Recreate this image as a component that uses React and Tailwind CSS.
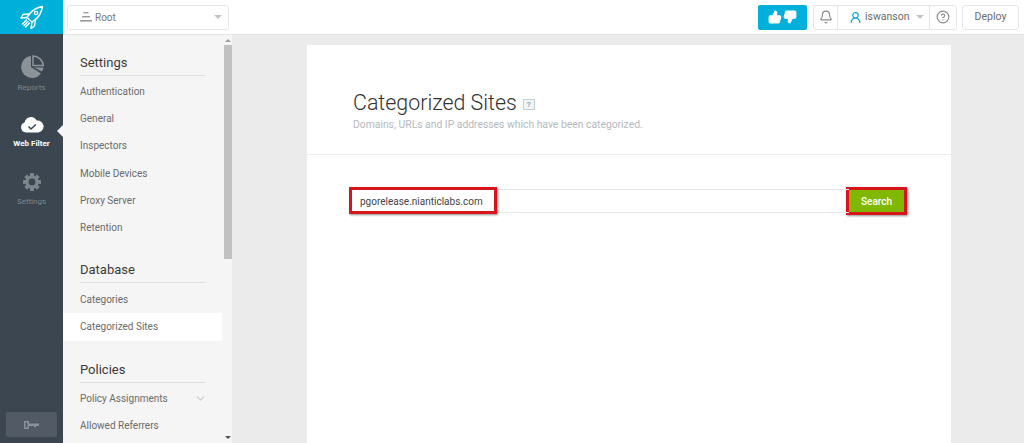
import { ChevronDown, Bell, UserRound, CircleHelp, ThumbsUp, ThumbsDown } from 'lucide-react';

const font = "font-['Roboto',sans-serif]";

function Rocket() {
  return (
    <svg width="24" height="24" viewBox="0 0 24 24" fill="none" stroke="white" strokeWidth="1.4" strokeLinejoin="round" strokeLinecap="round">
      <path d="M22.5 1.5 C17 2.5 13 4.5 9.5 9 L7 12.5 L12 17 L15.5 14.5 C20 11 21.5 7 22.5 1.5 Z" />
      <path d="M9.5 9 L3 9.5 L1 13 L7 12.5" />
      <path d="M15.5 14.5 L14.5 21 L11 23.5 L12 17" />
      <path d="M6.5 15 L2.5 19 M8 16.5 L4 20.5 M9.5 18 L5.5 22" />
      <circle cx="16" cy="8" r="1.6" />
    </svg>
  );
}

function PieIcon() {
  return (
    <svg width="24" height="24" viewBox="0 0 24 24">
      <path d="M11 1 A11 11 0 1 0 21 18.5 L11 12 Z" fill="#8b9298" />
      <path d="M13 1 A11 11 0 0 1 23.5 10.5 L13 10.5 Z" fill="none" stroke="#8b9298" strokeWidth="1.6" />
      <path d="M14 12.5 L23.5 12.5 A11 11 0 0 1 22 16.5 Z" fill="#8b9298" />
    </svg>
  );
}

function CloudIcon() {
  return (
    <svg width="24" height="17" viewBox="0 0 24 17">
      <path d="M6 16.5 A5.2 5.2 0 0 1 4.6 6.4 A6.4 6.4 0 0 1 16.6 4.6 A6 6 0 0 1 18.5 16.5 Z" fill="white" />
      <path d="M8.5 10.5 L11 13 L15.8 8.5" fill="none" stroke="#3c4650" strokeWidth="1.6" />
    </svg>
  );
}

function GearIcon() {
  const teeth = [0, 45, 90, 135, 180, 225, 270, 315];
  return (
    <svg width="18" height="18" viewBox="0 0 18 18">
      {teeth.map((deg) => (
        <rect key={deg} x="7" y="0" width="4" height="4" rx="0.6" fill="#7d858c" transform={`rotate(${deg} 9 9)`} />
      ))}
      <circle cx="9" cy="9" r="5" fill="none" stroke="#7d858c" strokeWidth="3.2" />
    </svg>
  );
}

function KeyIcon() {
  return (
    <svg width="15" height="8" viewBox="0 0 15 8" fill="#8a9097">
      <path d="M0 0 H5 V2.5 H15 V5 H12.5 V6 H10 V5 H5 V8 H0 Z M1.5 1.5 V6.5 H3.5 V1.5 Z" fillRule="evenodd" />
    </svg>
  );
}

function RailItem({ icon, label, active, gap, className }) {
  return (
    <div className={`flex flex-col items-center ${className}`}>
      {icon}
      <span className={`text-[8px] leading-[11px] ${gap} ${active ? 'text-white font-bold' : 'text-[#7d858c]'}`}>{label}</span>
    </div>
  );
}

function Section({ title, className, listClass, children }) {
  return (
    <div className={className}>
      <div className="ml-[17px] mr-[17px] h-[24px] border-b border-[#dfdfdf] text-[13px] leading-[21px] text-[#3b3b3b]">{title}</div>
      <div className={listClass}>{children}</div>
    </div>
  );
}

function NavItem({ label, active, chevron }) {
  return (
    <div className={`h-[27.2px] pl-[17px] pr-[15px] flex items-center justify-between text-[10px] text-[#6b6b6b] ${active ? 'bg-white' : ''}`}>
      {label}
      {chevron && <ChevronDown size={13} className="text-[#c3cdd0]" />}
    </div>
  );
}

export default function App() {
  return (
    <div className={`h-[443px] w-[1024px] overflow-hidden flex bg-[#ebebeb] ${font}`}>
      <div className="w-[63px] shrink-0 bg-[#3c4650] flex flex-col">
        <div className="h-[34px] bg-[#00b0da] flex items-center justify-center">
          <Rocket />
        </div>
        <RailItem className="mt-[21px]" gap="mt-[3px]" icon={<PieIcon />} label="Reports" />
        <div className="relative">
          <RailItem className="mt-[23px]" gap="mt-[5px]" icon={<CloudIcon />} label="Web Filter" active />
          <div className="absolute right-0 top-[32px] border-y-[6px] border-r-[6px] border-y-transparent border-r-[#f5f5f5]" />
        </div>
        <RailItem className="mt-[24px]" gap="mt-[5px]" icon={<GearIcon />} label="Settings" />
        <div className="mt-auto mb-[6px] mx-[6px] h-[25px] rounded-[2px] bg-[#525b65] flex items-center justify-center">
          <KeyIcon />
        </div>
      </div>

      <div className="flex-1 flex flex-col min-w-0">
        <div className="h-[35px] shrink-0 bg-white border-b border-[#e4e4e4] flex items-center pl-[4px] pr-[5px]">
          <div className="w-[162px] h-[25px] rounded-[3px] border border-[#e6e6e6] flex items-center pl-[12px] pr-[6px] text-[10px] text-[#777]">
            <svg width="12" height="10" viewBox="0 0 12 10" fill="#9a9a9a" className="mr-[3px]">
              <rect x="3.5" y="0" width="5" height="1.4" />
              <rect x="2" y="4" width="8" height="1.4" />
              <rect x="0" y="8" width="12" height="1.6" />
            </svg>
            Root
            <div className="ml-auto border-x-[4px] border-t-[4px] border-x-transparent border-t-[#c4c4c4]" />
          </div>
          <div className="ml-auto w-[49px] h-[25px] rounded-[2px] bg-[#00b0da] flex items-center justify-center gap-[1px]">
            <ThumbsUp size={14} fill="white" stroke="white" />
            <ThumbsDown size={14} fill="white" stroke="white" />
          </div>
          <div className="ml-[6px] h-[25px] w-[144px] rounded-[3px] border border-[#e6e6e6] flex items-center text-[10.5px] text-[#6b6b6b]">
            <div className="w-[24px] h-full flex items-center justify-center border-r border-[#e6e6e6]">
              <Bell size={14} className="text-[#8a8a8a]" />
            </div>
            <div className="flex-1 h-full flex items-center pl-[11px] border-r border-[#e6e6e6]">
              <UserRound size={13} strokeWidth={2.4} className="text-[#1ea8d8] mr-[3px]" />
              iswanson
              <div className="ml-[6px] border-x-[4px] border-t-[4px] border-x-transparent border-t-[#c4c4c4]" />
            </div>
            <div className="w-[26px] h-full flex items-center justify-center">
              <CircleHelp size={14} className="text-[#8a8a8a]" />
            </div>
          </div>
          <div className="ml-[5px] w-[57px] h-[25px] rounded-[3px] border border-[#e6e6e6] flex items-center justify-center text-[10.5px] text-[#6b6b6b]">Deploy</div>
        </div>

        <div className="flex-1 flex min-h-0">
          <div className="w-[169px] shrink-0 relative bg-[#f5f5f5] overflow-hidden pr-[10px] pt-[17px]">
            <Section title="Settings" listClass="mt-[2px]">
              {['Authentication', 'General', 'Inspectors', 'Mobile Devices', 'Proxy Server', 'Retention'].map((label) => (
                <NavItem key={label} label={label} />
              ))}
            </Section>
            <Section title="Database" className="mt-[18px]" listClass="mt-[3px]">
              <NavItem label="Categories" />
              <NavItem label="Categorized Sites" active />
            </Section>
            <Section title="Policies" className="mt-[18px]" listClass="mt-[2px]">
              <NavItem label="Policy Assignments" chevron />
              <NavItem label="Allowed Referrers" />
            </Section>
            <div className="absolute right-0 top-0 bottom-0 w-[8px] bg-[#f5f5f5] flex flex-col items-center">
              <div className="mt-[4px] border-x-[3px] border-b-[3px] border-x-transparent border-b-[#a0a0a0]" />
              <div className="mt-[3px] w-full h-[214px] bg-[#c1c1c1]" />
              <div className="mt-auto mb-[4px] border-x-[3px] border-t-[3px] border-x-transparent border-t-[#505050]" />
            </div>
          </div>

          <div className="flex-1 pl-[75px] pr-[73px] pt-[10px] min-w-0">
            <div className="h-[500px] bg-white">
              <div className="h-[110px] border-b border-[#eeeeee] pl-[46px] pt-[45px]">
                <div className="flex items-center">
                  <h1 className="text-[21.4px] leading-[26px] font-light text-[#333]">Categorized Sites</h1>
                  <span className="ml-[6px] mt-[2px] w-[12px] h-[11px] border border-[#c3d0d6] bg-[#f2f5f6] text-[8px] leading-[9px] text-center text-[#9aa8b0] font-bold">?</span>
                </div>
                <p className="mt-[2px] text-[10.35px] leading-[14px] text-[#b3b9be]">Domains, URLs and IP addresses which have been categorized.</p>
              </div>
              <div className="pl-[43px] pt-[32px] flex items-start">
                <div className="relative h-[24px] w-[499px] mt-[2px] border-y border-[#e8e8e8] flex items-center pl-[10px] text-[10px] text-[#444]">
                  pgorelease.nianticlabs.com
                  <div className="absolute -left-[1px] -top-[3px] h-[27px] w-[148px] border-[3px] border-[#d9151c] shadow-[1px_1px_2px_rgba(0,0,0,0.45)]" />
                </div>
                <div className="-ml-[3px] w-[61px] h-[28px] border-[3px] border-[#d9151c] bg-[#80b800] shadow-[1px_1px_2px_rgba(0,0,0,0.45)] flex items-center justify-center text-[10px] font-medium text-white">Search</div>
              </div>
            </div>
          </div>
        </div>
      </div>
    </div>
  );
}
